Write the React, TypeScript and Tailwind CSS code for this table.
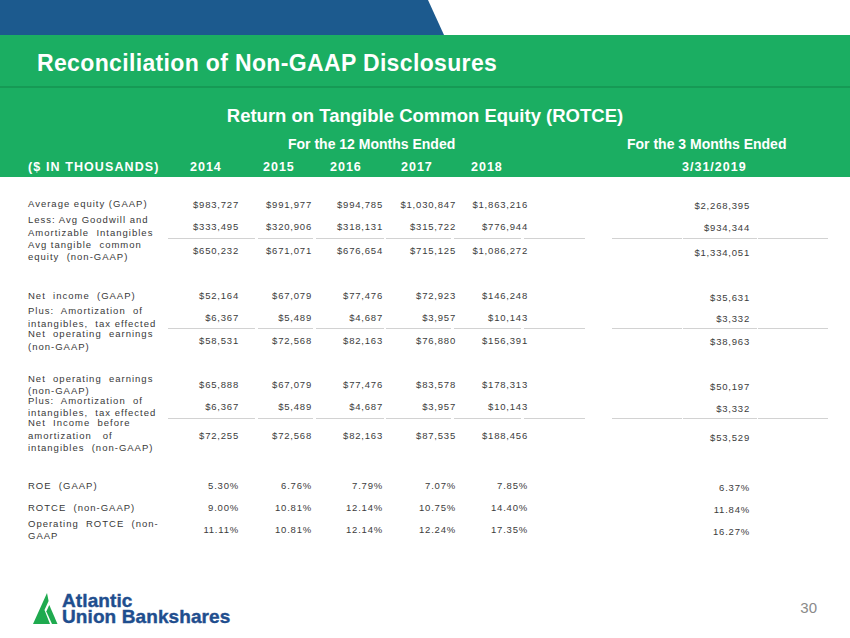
import React from "react";

type Row = { h: number; label: string[]; vals: string[]; sep?: boolean; spaceBefore?: number };

const rows: Row[] = [
  { h: 21, label: ["Average equity (GAAP)"], vals: ["$983,727", "$991,977", "$994,785", "$1,030,847", "$1,863,216", "$2,268,395"] },
  { h: 23, label: ["Less: Avg Goodwill and", "Amortizable  Intangibles"], vals: ["$333,495", "$320,906", "$318,131", "$315,722", "$776,944", "$934,344"], sep: true },
  { h: 24, label: ["Avg tangible  common", "equity  (non-GAAP)"], vals: ["$650,232", "$671,071", "$676,654", "$715,125", "$1,086,272", "$1,334,051"] },
  { h: 22, spaceBefore: 22, label: ["Net  income  (GAAP)"], vals: ["$52,164", "$67,079", "$77,476", "$72,923", "$146,248", "$35,631"] },
  { h: 21, label: ["Plus:  Amortization  of", "intangibles,  tax effected"], vals: ["$6,367", "$5,489", "$4,687", "$3,957", "$10,143", "$3,332"], sep: true },
  { h: 23, label: ["Net  operating  earnings", "(non-GAAP)"], vals: ["$58,531", "$72,568", "$82,163", "$76,880", "$156,391", "$38,963"] },
  { h: 22, spaceBefore: 22, label: ["Net  operating  earnings", "(non-GAAP)"], vals: ["$65,888", "$67,079", "$77,476", "$83,578", "$178,313", "$50,197"] },
  { h: 22, label: ["Plus:  Amortization  of", "intangibles,  tax effected"], vals: ["$6,367", "$5,489", "$4,687", "$3,957", "$10,143", "$3,332"], sep: true },
  { h: 34, label: ["Net  Income  before", "amortization   of", "intangibles  (non-GAAP)"], vals: ["$72,255", "$72,568", "$82,163", "$87,535", "$188,456", "$53,529"] },
  { h: 22, spaceBefore: 22, label: ["ROE  (GAAP)"], vals: ["5.30%", "6.76%", "7.79%", "7.07%", "7.85%", "6.37%"] },
  { h: 22, label: ["ROTCE  (non-GAAP)"], vals: ["9.00%", "10.81%", "12.14%", "10.75%", "14.40%", "11.84%"] },
  { h: 22, label: ["Operating  ROTCE  (non-", "GAAP"], vals: ["11.11%", "10.81%", "12.14%", "12.24%", "17.35%", "16.27%"] },
];

const colW = ["w-[71px]", "w-[73px]", "w-[71px]", "w-[73px]", "w-[72px]", "w-[222px]"];

function Separator() {
  const segs: [number, number][] = [
    [168, 255], [258, 313], [316, 384], [386, 451], [454, 521], [524, 585], [612, 682], [683, 757], [758, 828],
  ];
  return (
    <div className="relative h-px w-full">
      {segs.map(([a, b], i) => (
        <div key={i} className="absolute top-0 h-px bg-[#d2d2d2]" style={{ left: a, width: b - a }} />
      ))}
    </div>
  );
}

function Logo() {
  return (
    <div className="flex items-start gap-[4px]">
      <svg width="25" height="31" viewBox="0 0 25 31">
        <path d="M14 0 L0 31 L17 31 L11.5 17 L15.6 8 Z" fill="#1faa4f" />
        <path d="M16.3 12 L24.5 31 L19 31 L13.3 18.5 Z" fill="#1faa4f" />
      </svg>
      <div
        className="flex flex-col text-[#1f4e8e] font-bold text-[19px] leading-[16px] tracking-[0.1px] [-webkit-text-stroke:0.4px_#1f4e8e]"
        style={{ fontFamily: '"Liberation Sans", Arial, sans-serif' }}
      >
        <span className="h-[16px]">Atlantic</span>
        <span className="h-[16px]">Union Bankshares</span>
      </div>
    </div>
  );
}

export default function App() {
  return (
    <div
      className="w-[850px] h-[638px] bg-white flex flex-col overflow-hidden"
      style={{ fontFamily: '"Liberation Sans", Arial, sans-serif' }}
    >
      {/* top blue band */}
      <div className="h-[35px] w-full shrink-0 bg-[#1c5a8e] [clip-path:polygon(0_0,428px_0,444px_100%,0_100%)]" />

      {/* green header */}
      <div className="h-[142px] w-full shrink-0 bg-[#1bae62] flex flex-col">
        <div className="h-[51px] pt-[17px] pl-[37px]">
          <div className="text-white font-bold text-[23px] leading-[23px] tracking-[0.35px] whitespace-nowrap">
            Reconciliation of Non-GAAP Disclosures
          </div>
        </div>
        <div className="h-[2px] bg-[#169a55]" />
        <div className="pt-[19px] text-center text-white font-bold text-[18.5px] leading-[18.5px] whitespace-nowrap">
          Return on Tangible Common Equity (ROTCE)
        </div>
        <div className="mt-[11px] flex pl-[288px] text-white font-bold text-[14px] leading-[14px] whitespace-nowrap">
          <span className="w-[339px]">For the 12 Months Ended</span>
          <span>For the 3 Months Ended</span>
        </div>
        <div className="mt-[10px] flex pl-[28px] text-white font-bold text-[12.5px] leading-[12.5px] tracking-[1px] whitespace-nowrap">
          <span className="w-[162px] tracking-[1.1px]">($ IN THOUSANDS)</span>
          <span className="w-[73px]">2014</span>
          <span className="w-[67px]">2015</span>
          <span className="w-[71px]">2016</span>
          <span className="w-[70px]">2017</span>
          <span className="w-[211px]">2018</span>
          <span>3/31/2019</span>
        </div>
      </div>

      {/* table */}
      <div className="flex flex-col pt-[17px]">
        {rows.map((r, i) => (
          <React.Fragment key={i}>
            {r.spaceBefore ? <div style={{ height: r.spaceBefore }} /> : null}
            <div className="flex items-center pl-[28px]" style={{ height: r.h }}>
              <div className="w-[140px] text-[9.5px] leading-[12.5px] tracking-[1px] text-[#383838] whitespace-pre">
                {r.label.map((l, j) => (
                  <div key={j}>{l}</div>
                ))}
              </div>
              {r.vals.map((v, j) => (
                <div
                  key={j}
                  className={`${colW[j]} text-right text-[9.5px] leading-[12px] tracking-[0.8px] text-[#3c3c3c] ${j === 5 ? "pt-[3px]" : ""}`}
                >
                  {v}
                </div>
              ))}
            </div>
            {r.sep ? <Separator /> : null}
          </React.Fragment>
        ))}
      </div>

      {/* footer */}
      <div className="mt-[52px] flex items-start justify-between pl-[33px] pr-[33px]">
        <Logo />
        <div className="mt-[7px] text-[15px] leading-[15px] text-[#8a8a8a]">30</div>
      </div>
    </div>
  );
}
